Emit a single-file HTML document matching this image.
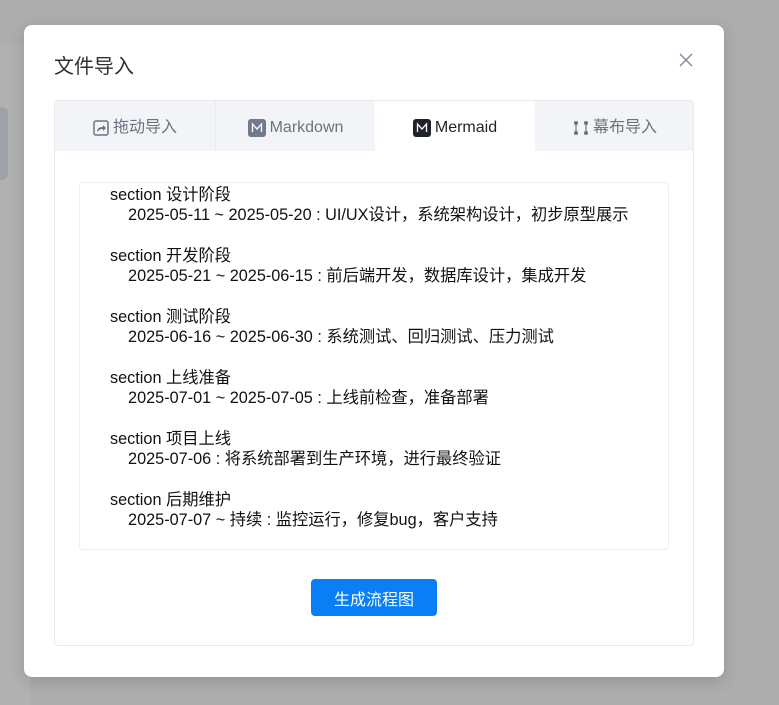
<!DOCTYPE html>
<html><head><meta charset="utf-8"><style>
*{margin:0;padding:0;box-sizing:border-box}
body{width:779px;height:695px;background:#adadad;position:relative;overflow:hidden;font-family:"Liberation Sans","Noto Sans CJK SC",sans-serif}
.bgpanel{position:absolute;left:0;top:45px;width:30px;height:660px;background:#b1b1b1}
.bgbox{position:absolute;left:-10px;top:107px;width:18px;height:73px;background:#9ea1a8;border-radius:6px}
.modal{position:absolute;left:24px;top:25px;width:700px;height:652px;background:#fff;border-radius:8px;box-shadow:0 4px 16px rgba(0,0,0,.15)}
.title{position:absolute;left:30px;top:25px;font-size:20px;color:#303133}
.close{position:absolute;left:655px;top:28px}
.tabs{position:absolute;left:30px;top:75px;width:640px;height:546px;border:1px solid #e8eaee;border-radius:4px;overflow:hidden}
.head{height:50px;background:#f3f4f7;position:relative}
.tab{position:absolute;top:0;height:50px;width:160px;display:flex;align-items:center;justify-content:center;font-size:16px;line-height:18px;color:#6b7280;gap:4px;padding-top:4px}
.tab svg{display:block}
.tab.a{background:#fff;color:#1f2329}
.ta{position:absolute;left:24px;top:81px;width:590px;height:368px;border:1px solid #eceef1;border-radius:4px}
pre{position:absolute;left:30px;top:2px;font-family:inherit;font-size:16.25px;line-height:20.33px;color:#111}
.btn{position:absolute;left:256px;top:478px;width:126px;height:37px;background:#0a7ff5;border-radius:4px;color:#fff;font-size:16px;display:flex;align-items:center;justify-content:center}
</style></head><body>
<div class="bgpanel"></div><div class="bgbox"></div>
<div class="modal">
<div class="title">文件导入</div>
<svg class="close" width="14" height="14" viewBox="0 0 14 14"><path d="M1 1L13 13M13 1L1 13" stroke="#7b8497" stroke-width="1.3"/></svg>
<div class="tabs">
<div class="head">
<div class="tab" style="left:0"><svg width="16" height="16" viewBox="0 0 16 16"><rect x="1" y="1" width="14" height="14" rx="2" fill="none" stroke="#6b7280" stroke-width="1.5"/><path d="M4 12c0-4 3-5 6-5V5l3 3-3 3V9c-3 0-4 1-6 3z" fill="#6b7280"/></svg>拖动导入</div>
<div class="tab" style="left:160px;border-left:1px solid #e8eaee"><svg width="18" height="18" viewBox="0 0 18 18"><rect width="18" height="18" rx="3" fill="#707a8c"/><path d="M4.5 13V5l4.5 5 4.5-5v8" fill="none" stroke="#fff" stroke-width="1.3"/></svg>Markdown</div>
<div class="tab a" style="left:320px"><svg width="18" height="18" viewBox="0 0 18 18"><rect width="18" height="18" rx="3" fill="#1f2329"/><path d="M4.5 13V5l4.5 5 4.5-5v8" fill="none" stroke="#fff" stroke-width="1.3"/></svg>Mermaid</div>
<div class="tab" style="left:480px"><svg width="16" height="16" viewBox="0 0 16 16"><circle cx="3" cy="3" r="2" fill="#6b7280"/><circle cx="13" cy="3" r="2" fill="#6b7280"/><circle cx="3" cy="13" r="2" fill="#6b7280"/><circle cx="13" cy="13" r="2" fill="#6b7280"/><path d="M3 3v10M13 3v10" stroke="#6b7280" stroke-width="1.2"/></svg>幕布导入</div>
</div>
<div class="ta"><pre>section 设计阶段
    2025-05-11 ~ 2025-05-20 : UI/UX设计，系统架构设计，初步原型展示

section 开发阶段
    2025-05-21 ~ 2025-06-15 : 前后端开发，数据库设计，集成开发

section 测试阶段
    2025-06-16 ~ 2025-06-30 : 系统测试、回归测试、压力测试

section 上线准备
    2025-07-01 ~ 2025-07-05 : 上线前检查，准备部署

section 项目上线
    2025-07-06 : 将系统部署到生产环境，进行最终验证

section 后期维护
    2025-07-07 ~ 持续 : 监控运行，修复bug，客户支持</pre></div>
<div class="btn">生成流程图</div>
</div>
</div>
</body></html>
